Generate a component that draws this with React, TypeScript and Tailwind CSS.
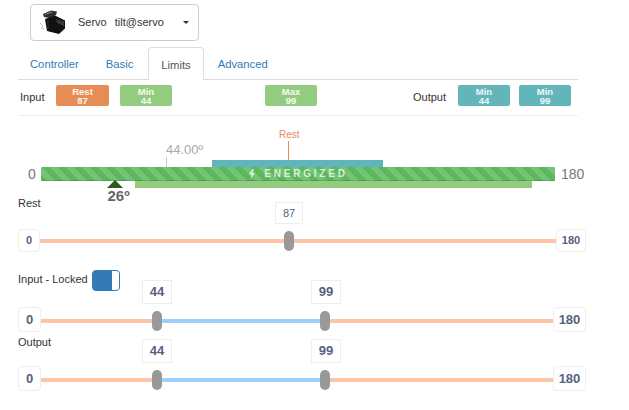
const tabs = ["Controller", "Basic", "Limits", "Advanced"];

const ServoIcon = () => (
  <svg width="30" height="30" viewBox="0 0 30 30" className="shrink-0">
    <path d="M1 15 L4 18 L2 20 L5 21" fill="none" stroke="#c9a9a9" strokeWidth="0.8" />
    <path d="M4 6 L12 2.5 L18 3.5 L17 7 L11 10 L5 9 Z" fill="#2b3036" />
    <path d="M6 11 L16 7.5 L26 12.5 L26 20.5 L20 26 L8 23 Z" fill="#111111" />
    <path d="M17 11 L25 13.5 L25 18 L18 15 Z" fill="#3a3a3a" />
    <path d="M6 6.5 L13 4" stroke="#858c92" strokeWidth="1" />
    <path d="M9 12 L9 21" stroke="#2e2e2e" strokeWidth="1" />
  </svg>
);

const Badge = ({ top, value, color, className = "" }: { top: string; value: number; color: string; className?: string }) => (
  <div className={`flex h-[21px] w-[52px] flex-col items-center justify-center rounded-[2px] text-[9.5px] leading-[9px] font-bold text-white/90 ${color} ${className}`}>
    <span>{top}</span>
    <span>{value}</span>
  </div>
);

const Thumb = ({ left }: { left: string }) => (
  <div className={`absolute top-1/2 h-5 w-2.5 -translate-y-1/2 rounded-full bg-[#999999] ${left}`} />
);

const ValueBox = ({ value, className }: { value: number; className: string }) => (
  <div className={`absolute flex items-center justify-center border border-[#eeeeee] bg-white text-[#56617f] ${className}`}>{value}</div>
);

const LimitBox = ({ value, className }: { value: number; className: string }) => (
  <div className={`flex shrink-0 items-center justify-center rounded-[4px] border border-[#eeeeee] bg-white font-bold text-[#56617f] ${className}`}>{value}</div>
);

const RangeTrack = () => (
  <div className="relative mt-[3px] h-1 flex-1 bg-[#fdc4a8]">
    <div className="absolute inset-y-0 left-[116px] w-[168px] bg-[#9ccffa]" />
    <Thumb left="left-[111px]" />
    <Thumb left="left-[279px]" />
    <ValueBox value={44} className="left-[101px] top-[-39px] h-6 w-[30px] text-[13px] font-bold" />
    <ValueBox value={99} className="left-[270px] top-[-39px] h-6 w-[30px] text-[13px] font-bold" />
  </div>
);

export default function App() {
  return (
    <div className="h-[410px] w-[629px] overflow-hidden bg-white pt-1 font-['Liberation_Sans',sans-serif] text-[11px] text-[#333333]">
      <div className="ml-[30px] flex h-[37px] w-[169px] items-center rounded-[4px] border border-[#cccccc] pl-[8px]">
        <ServoIcon />
        <span className="ml-[9px]">Servo</span>
        <span className="ml-[8px]">tilt@servo</span>
        <span className="ml-[19px] h-0 w-0 border-x-[3px] border-t-[3px] border-x-transparent border-t-[#333333]" />
      </div>

      <div className="mx-[18px] mt-[6px] flex h-[33px] w-[560px] gap-[3px] border-b border-[#dddddd]">
        {tabs.map((t) => (
          <div
            key={t}
            className={
              t === "Limits"
                ? "mr-[-1px] mb-[-1px] flex items-center rounded-t-[4px] border border-b-0 border-[#dddddd] bg-white px-3 pt-[2px] text-[11.25px] text-[#555555]"
                : "flex items-center border border-transparent px-[11px] pt-[2px] text-[11.25px] text-[#337ab7]"
            }
          >
            {t}
          </div>
        ))}
      </div>

      <div className="mx-[18px] flex h-[36px] w-[560px] items-start border-b border-[#eeeeee] pt-[5px]">
        <span className="ml-[2px] w-[36px] self-center pb-[5px]">Input</span>
        <Badge top="Rest" value={87} color="bg-[#e68d55]" className="w-[53px]" />
        <Badge top="Min" value={44} color="bg-[#93cc7f]" className="ml-[11px]" />
        <Badge top="Max" value={99} color="bg-[#93cc7f]" className="ml-[93px]" />
        <span className="ml-[96px] w-[45px] self-center pb-[5px]">Output</span>
        <Badge top="Min" value={44} color="bg-[#62b6b9]" />
        <Badge top="Min" value={99} color="bg-[#62b6b9]" className="ml-[9px]" />
      </div>

      <div className="ml-[28px] flex h-[80px] w-[560px] items-start pt-[51px] text-[14px] leading-[14px] text-[#777777]">
        <span className="w-[13px]">0</span>
        <div className="relative h-[14px] w-[514px] rounded-[1px] bg-[#5cb85c] bg-[linear-gradient(45deg,#74c376_25%,#5cb85c_25%,#5cb85c_50%,#74c376_50%,#74c376_75%,#5cb85c_75%)] bg-[length:16px_16px] bg-[position:8px_0] shadow-[inset_0_-1px_0_rgba(0,0,0,0.15)]">
          <div className="absolute bottom-full left-[171px] h-[7px] w-[171px] bg-[#5fb5bb]" />
          <div className="absolute top-full left-[94px] h-[7px] w-[397px] bg-[#93cc7f]" />

          <div className="absolute bottom-full left-[125px] h-[10px] w-px bg-[#cccccc]" />
          <span className="absolute top-[-24px] left-[125px] text-[13px] leading-[14px] whitespace-nowrap text-[#aaaaaa]">44.00º</span>

          <div className="absolute bottom-[21px] left-[247px] h-[19px] w-px bg-[#e68d55]" />
          <span className="absolute top-[-38px] left-[238px] text-[10px] leading-[11px] text-[#e68d55]">Rest</span>

          <div className="absolute top-[13px] left-[66px] h-0 w-0 border-x-[8px] border-b-[8px] border-x-transparent border-b-[#2d5a1e]" />
          <span className="absolute top-[21px] left-[66.5px] text-[15px] leading-[16px] font-bold text-[#666666]">26º</span>

          <div className="absolute inset-0 flex items-center justify-center gap-[8px] text-[10px] font-bold tracking-[2.8px] text-white/75">
            <svg width="8" height="10" viewBox="0 0 8 10" fill="currentColor">
              <path d="M4.5 0 L1 5.5 H3.5 L2.5 10 L7 4 H4.5 L6 0 Z" />
            </svg>
            <span>ENERGIZED</span>
          </div>
        </div>
        <span className="ml-[6px]">180</span>
      </div>

      <div className="mx-[18px] h-[74px] w-[568px]">
        <div className="h-[33px] pt-px leading-[13px]">Rest</div>
        <div className="flex h-[23px] items-center">
          <LimitBox value={0} className="h-[23px] w-[22px]" />
          <div className="relative mt-px h-1 flex-1 bg-[#fdc4a8]">
            <Thumb left="left-[244px]" />
            <ValueBox value={87} className="left-[235px] top-[-37px] h-[22px] w-[28px] text-[11px]" />
          </div>
          <LimitBox value={180} className="h-[23px] w-[30px]" />
        </div>
      </div>

      <div className="mx-[18px] w-[568px]">
        <div className="flex h-[37px] items-start">
          <span className="mt-[2px] leading-[14px]">Input - Locked</span>
          <div className="ml-[4px] flex h-[21px] w-[28px] justify-end rounded-[4px] border border-[#337ab7] bg-[#337ab7]">
            <div className="w-[7px] rounded-r-[3px] bg-white" />
          </div>
        </div>
        <div className="flex h-[25px] items-center text-[13px]">
          <LimitBox value={0} className="h-[25px] w-[23px]" />
          <RangeTrack />
          <LimitBox value={180} className="h-[25px] w-[33px]" />
        </div>
        <div className="h-[34px] pt-[4px] leading-[13px]">Output</div>
        <div className="flex h-[25px] items-center text-[13px]">
          <LimitBox value={0} className="h-[25px] w-[23px]" />
          <RangeTrack />
          <LimitBox value={180} className="h-[25px] w-[33px]" />
        </div>
      </div>
    </div>
  );
}
